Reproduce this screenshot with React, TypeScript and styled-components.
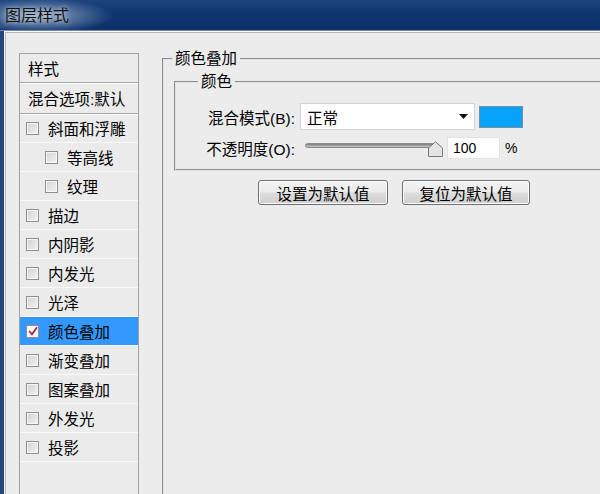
import React from "react";
import styled, { createGlobalStyle } from "styled-components";

const GlobalStyle = createGlobalStyle`
  html, body { margin: 0; padding: 0; background: #ececec; }
  body { font-family: "Liberation Sans", "Noto Sans CJK SC", sans-serif; color: #000; }
`;

const Window = styled.div`
  width: 600px;
  height: 494px;
  overflow: hidden;
  display: flex;
  flex-direction: column;
  background: #ececec;
`;

const TitleBar = styled.div`
  height: 31px;
  flex: none;
  display: flex;
  align-items: center;
  padding-left: 5px;
  padding-top: 1px;
  box-sizing: border-box;
  border-bottom: 1px solid #6f88ad;
  background:
    radial-gradient(ellipse 75px 18px at 38px 16px, rgba(170, 190, 215, 0.85), rgba(170, 190, 215, 0) 100%),
    linear-gradient(180deg, #1d447d 0%, #10366f 45%, #0c306a 100%);
  font-size: 16px;
  line-height: 20px;
  color: #111;
  text-shadow: 0 0 5px rgba(235, 240, 248, 0.9);
`;

const Frame = styled.div`
  flex: 1;
  min-height: 0;
  display: flex;
  border-left: 4px solid #24487d;
`;

const Body = styled.div`
  flex: 1;
  min-width: 0;
  display: flex;
  align-items: flex-start;
  overflow: hidden;
  border-top: 1px solid #fbfbfb;
  border-left: 1px solid #f4f4f4;
  box-shadow: inset 1px 1px 0 #b8b8b8;
  padding: 17px 0 0 14px;
`;

const List = styled.div`
  flex: none;
  width: 120px;
  height: 460px;
  margin-top: 4px;
  box-sizing: border-box;
  border: 1px solid #a2a2a2;
  background: #ebebeb;
  display: flex;
  flex-direction: column;
`;

const HeaderRow = styled.div<{ $h: number }>`
  height: ${(p) => p.$h}px;
  flex: none;
  box-sizing: border-box;
  display: flex;
  align-items: center;
  padding-left: 8px;
  border-bottom: 1px solid #a6a6a6;
  box-shadow: 0 1px 0 #fdfdfd;
  font-size: 15.5px;
  white-space: nowrap;
`;

const Item = styled.div<{ $indent?: boolean; $active?: boolean }>`
  height: 29px;
  flex: none;
  box-sizing: border-box;
  display: flex;
  align-items: center;
  gap: 9px;
  padding-left: ${(p) => (p.$indent ? 25 : 6)}px;
  border-bottom: 1px solid #fafafa;
  background: ${(p) => (p.$active ? "#3399ff" : "transparent")};
  font-size: 15.5px;
  white-space: nowrap;
`;

const Box = styled.span<{ $checked?: boolean }>`
  width: 13px;
  height: 13px;
  flex: none;
  box-sizing: border-box;
  border: 1px solid #8f8f8f;
  background: ${(p) => (p.$checked ? "#fdfdfd" : "linear-gradient(135deg, #d2d2d2, #f3f3f3)")};
  box-shadow: inset 0 0 0 1px #f6f6f6;
  display: flex;
  align-items: center;
  justify-content: center;
`;

const Content = styled.div`
  flex: none;
  width: 520px;
  margin-left: 23px;
`;

const OuterGroup = styled.fieldset`
  margin: 0;
  min-width: 0;
  height: 470px;
  box-sizing: border-box;
  border: 2px groove #e2e2e2;
  padding: 3px 0 0 8px;
`;

const InnerGroup = styled.fieldset`
  margin: 0 0 0 2px;
  min-width: 0;
  box-sizing: border-box;
  border: 2px groove #e2e2e2;
  padding: 11px 0 10px 22px;
`;

const Legend = styled.legend`
  padding: 0 3px;
  font-size: 15.5px;
  line-height: 20px;
`;

const FormGrid = styled.div`
  display: grid;
  grid-template-columns: 97px auto;
  column-gap: 5px;
  row-gap: 7px;
  align-items: center;
  justify-content: start;
`;

const Label = styled.div`
  text-align: right;
  font-size: 15.5px;
  white-space: nowrap;
`;

const Control = styled.div`
  display: flex;
  align-items: center;
`;

const Select = styled.div`
  width: 175px;
  height: 27px;
  box-sizing: border-box;
  border: 1px solid #d4d4d4;
  background: #fff;
  display: flex;
  align-items: center;
  justify-content: space-between;
  padding: 0 6px 0 6px;
  font-size: 15.5px;
`;

const Swatch = styled.div`
  width: 44px;
  height: 22px;
  margin-left: 4px;
  box-sizing: border-box;
  border: 1px solid #7f8d99;
  background: #07a2fa;
`;

const Slider = styled.div`
  position: relative;
  width: 138px;
  height: 16px;
  margin-left: 5px;
  margin-top: 1px;
`;

const Track = styled.div`
  width: 132px;
  height: 5px;
  margin-top: 2px;
  border-radius: 3px;
  border: 1px solid #8a8a8a;
  box-sizing: border-box;
  background: linear-gradient(180deg, #7c7c7c, #c8c8c8);
`;

const Thumb = styled.svg`
  position: absolute;
  right: 0;
  top: 0;
`;

const NumberBox = styled.div`
  width: 53px;
  height: 22px;
  margin-left: 4px;
  box-sizing: border-box;
  border: 1px solid #e2e2e2;
  background: #fff;
  display: flex;
  align-items: center;
  padding-left: 5px;
  font-size: 14px;
`;

const Percent = styled.span`
  margin-left: 5px;
  font-size: 14px;
`;

const ButtonRow = styled.div`
  display: flex;
  gap: 14px;
  margin-top: 9px;
  padding-left: 86px;
`;

const Button = styled.div<{ $w: number }>`
  width: ${(p) => p.$w}px;
  height: 25px;
  box-sizing: border-box;
  border: 1px solid #707070;
  border-radius: 3px;
  background: linear-gradient(180deg, #f3f3f3 0%, #ebebeb 48%, #dddddd 52%, #cfcfcf 100%);
  box-shadow: inset 0 0 0 1px #fbfbfb;
  display: flex;
  align-items: center;
  justify-content: center;
  font-size: 15.5px;
`;

type Entry = { label: string; indent?: boolean; active?: boolean };

const entries: Entry[] = [
  { label: "斜面和浮雕" },
  { label: "等高线", indent: true },
  { label: "纹理", indent: true },
  { label: "描边" },
  { label: "内阴影" },
  { label: "内发光" },
  { label: "光泽" },
  { label: "颜色叠加", active: true },
  { label: "渐变叠加" },
  { label: "图案叠加" },
  { label: "外发光" },
  { label: "投影" },
];

const Check = () => (
  <svg width="10" height="10" viewBox="0 0 10 10">
    <path d="M1.2 5 L4 8.3 L9 1.2" fill="none" stroke="#a8224a" strokeWidth="1.8" />
  </svg>
);

export default function App() {
  return (
    <>
      <GlobalStyle />
      <Window>
        <TitleBar>图层样式</TitleBar>
        <Frame>
          <Body>
            <List>
              <HeaderRow $h={29}>样式</HeaderRow>
              <HeaderRow $h={31}>混合选项:默认</HeaderRow>
              {entries.map((e) => (
                <Item key={e.label} $indent={e.indent} $active={e.active}>
                  <Box $checked={e.active}>{e.active && <Check />}</Box>
                  <span>{e.label}</span>
                </Item>
              ))}
            </List>
            <Content>
              <OuterGroup>
                <Legend>颜色叠加</Legend>
                <InnerGroup>
                  <Legend>颜色</Legend>
                  <FormGrid>
                    <Label>混合模式(B):</Label>
                    <Control>
                      <Select>
                        <span>正常</span>
                        <svg width="9" height="5" viewBox="0 0 9 5">
                          <path d="M0 0 H9 L4.5 5 Z" fill="#111" />
                        </svg>
                      </Select>
                      <Swatch />
                    </Control>
                    <Label>不透明度(O):</Label>
                    <Control>
                      <Slider>
                        <Track />
                        <Thumb width="15" height="16" viewBox="0 0 15 16">
                          <path
                            d="M0.5 15.5 V7 L7.5 0.8 L14.5 7 V15.5 Z"
                            fill="#e4e4e4"
                            stroke="#7a7a7a"
                            strokeWidth="1"
                          />
                        </Thumb>
                      </Slider>
                      <NumberBox>100</NumberBox>
                      <Percent>%</Percent>
                    </Control>
                  </FormGrid>
                </InnerGroup>
                <ButtonRow>
                  <Button $w={130}>设置为默认值</Button>
                  <Button $w={128}>复位为默认值</Button>
                </ButtonRow>
              </OuterGroup>
            </Content>
          </Body>
        </Frame>
      </Window>
    </>
  );
}
